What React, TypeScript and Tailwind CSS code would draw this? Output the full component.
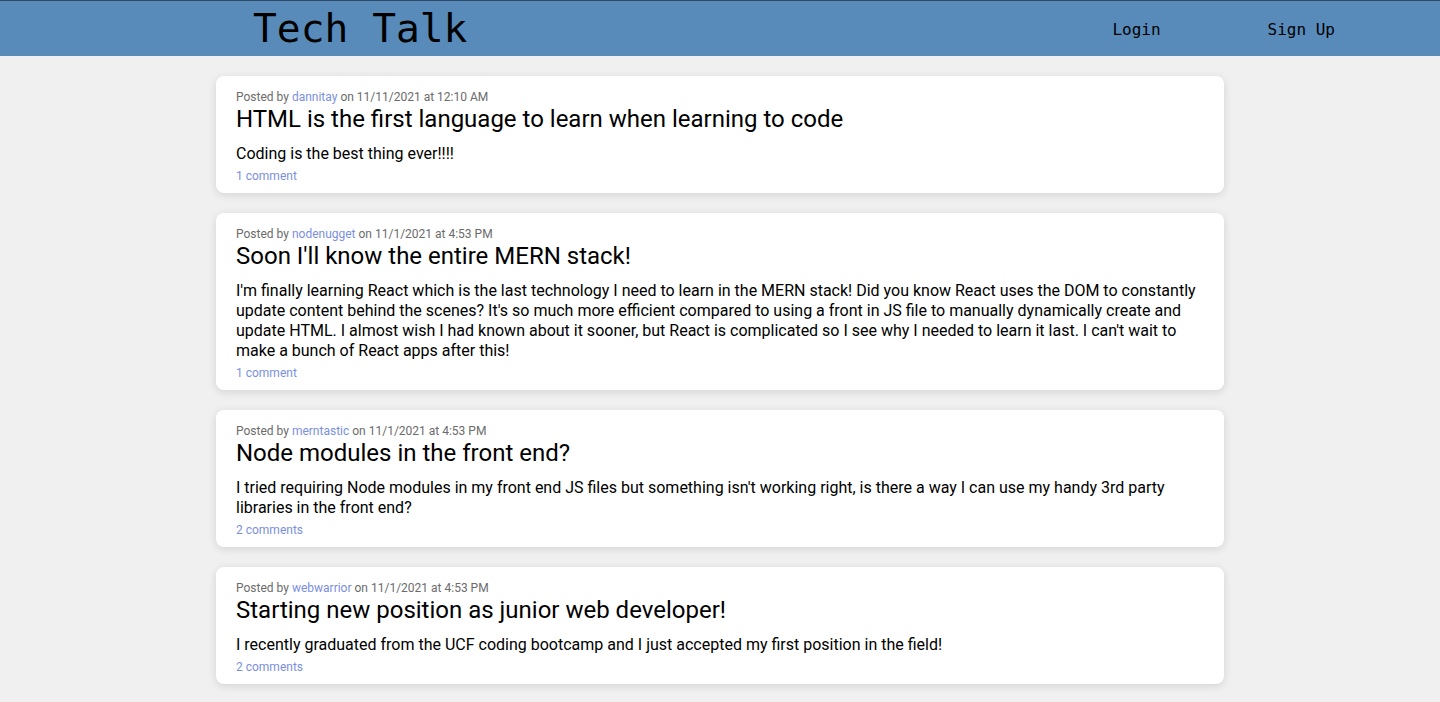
import React from "react";

const posts = [
  {
    user: "dannitay",
    date: "11/11/2021 at 12:10 AM",
    title: "HTML is the first language to learn when learning to code",
    body: "Coding is the best thing ever!!!!",
    comments: "1 comment",
  },
  {
    user: "nodenugget",
    date: "11/1/2021 at 4:53 PM",
    title: "Soon I'll know the entire MERN stack!",
    body: "I'm finally learning React which is the last technology I need to learn in the MERN stack! Did you know React uses the DOM to constantly update content behind the scenes? It's so much more efficient compared to using a front in JS file to manually dynamically create and update HTML. I almost wish I had known about it sooner, but React is complicated so I see why I needed to learn it last. I can't wait to make a bunch of React apps after this!",
    comments: "1 comment",
  },
  {
    user: "merntastic",
    date: "11/1/2021 at 4:53 PM",
    title: "Node modules in the front end?",
    body: "I tried requiring Node modules in my front end JS files but something isn't working right, is there a way I can use my handy 3rd party libraries in the front end?",
    comments: "2 comments",
  },
  {
    user: "webwarrior",
    date: "11/1/2021 at 4:53 PM",
    title: "Starting new position as junior web developer!",
    body: "I recently graduated from the UCF coding bootcamp and I just accepted my first position in the field!",
    comments: "2 comments",
  },
];

export default function App() {
  return (
    <div className="min-h-screen bg-[#f0f0f0]" style={{ fontFamily: "Roboto, 'Liberation Sans', sans-serif" }}>
      <header className="h-[56px] bg-[#588bba] border-t border-[#2d4b66] flex items-center">
        <h1 className="ml-[253px] text-[39.6px] leading-none text-black font-['DejaVu_Sans_Mono',monospace]">
          Tech Talk
        </h1>
        <nav className="ml-auto mr-[105px] mt-[2px] flex items-center gap-[107px] text-[16px] text-black font-['DejaVu_Sans_Mono',monospace]">
          <a>Login</a>
          <a>Sign Up</a>
        </nav>
      </header>
      <main className="w-[1008px] mx-auto pt-[20px] pb-[20px] flex flex-col gap-[20px]">
        {posts.map((p) => (
          <article key={p.title} className="bg-white rounded-[8px] shadow-[0_2px_8px_rgba(0,0,0,0.12)] px-[20px] pt-[14px] pb-[10px]">
            <div className="text-[12px] leading-[14px] text-[#6b6b6b]">
              Posted by <span className="text-[#7b8fe0]">{p.user}</span> on {p.date}
            </div>
            <h2 className="text-[24px] leading-[30px] text-black">{p.title}</h2>
            <p className="mt-[10px] text-[16px] leading-[20px] text-black">{p.body}</p>
            <div className="mt-[5px] text-[12px] leading-[14px] text-[#7b8fe0]">{p.comments}</div>
          </article>
        ))}
      </main>
    </div>
  );
}
